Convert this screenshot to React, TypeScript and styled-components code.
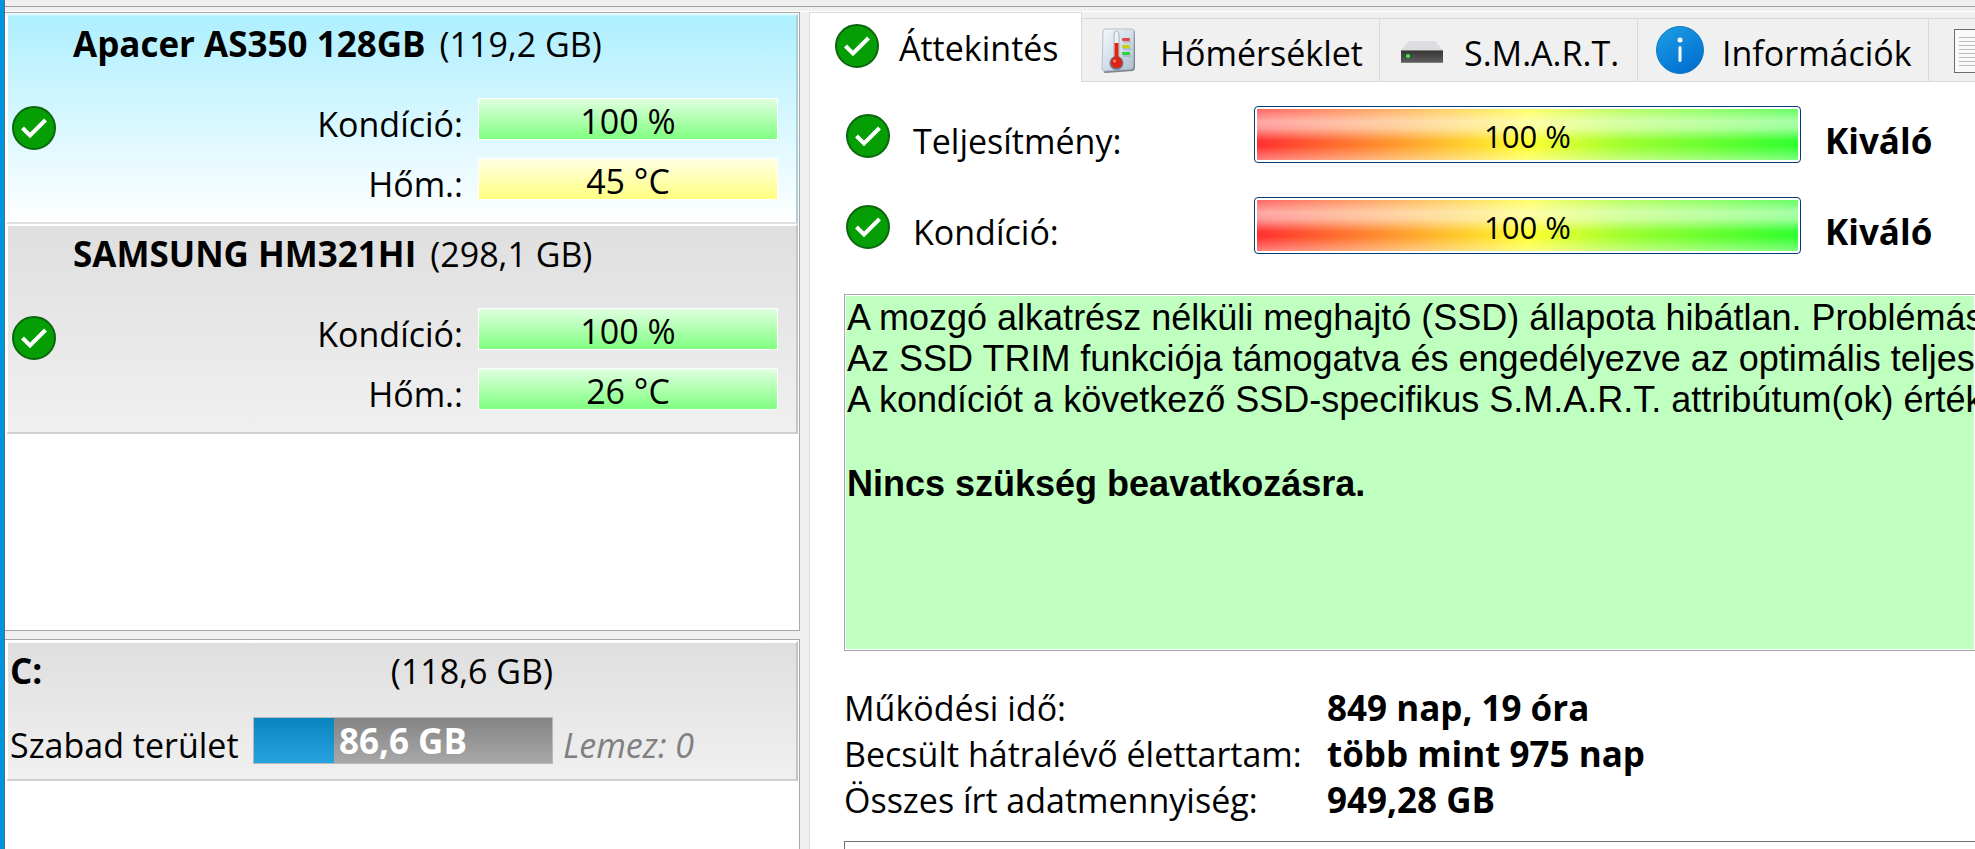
import React from "react";
import styled, { createGlobalStyle } from "styled-components";

const Global = createGlobalStyle`
  * { box-sizing: border-box; }
  html, body, #root { height: 100%; }
  body {
    margin: 0;
    overflow: hidden;
    background: #f0f0f0;
    color: #000;
    font-family: "Open Sans", "Noto Sans", sans-serif;
    font-size: 34px;
    line-height: 46px;
  }
`;

const Window = styled.div`
  height: 100%;
  display: flex;
  flex-direction: column;
  border-left: 4px solid #0095e0;
  box-shadow: inset 1px 0 0 #4d7080;
`;

const Toolbar = styled.header`
  flex: none;
  height: 12px;
  margin-left: 1px;
  border-bottom: 1px solid #fff;
  background: linear-gradient(#f0f0f0 6px, #a0a0a0 6px, #a0a0a0 7px, #f0f0f0 7px);
`;

const Body = styled.div`
  flex: 1;
  min-height: 0;
  margin-left: 1px;
  display: grid;
  grid-template-columns: 795px minmax(0, 1fr);
  column-gap: 9px;
`;

const Sidebar = styled.aside`
  display: flex;
  flex-direction: column;
  gap: 8px;
`;

const List = styled.section<{ $grow?: boolean }>`
  height: ${(p) => (p.$grow ? "auto" : "619px")};
  flex: ${(p) => (p.$grow ? "1" : "none")};
  background: #fff;
  border: 1px solid #a8a8a8;
  border-left: 0;
  border-bottom-width: ${(p) => (p.$grow ? 0 : 1)}px;
  padding: 1px 1px 0;
`;

const Card = styled.article<{ $selected?: boolean }>`
  border: 2px solid;
  border-color: ${(p) => (p.$selected ? "#ccf6ff #a9d0d8 #e0e0e0 #fff" : "#fff #c4c4c4 #d0d0d0 #fff")};
  background: ${(p) => (p.$selected ? "linear-gradient(#aeefff, #fff)" : "linear-gradient(#dfdfdf, #f0f0f0)")};
`;

const DiskBody = styled(Card)`
  height: 210px;
  display: grid;
  grid-template-columns: 61px 1fr auto 300px;
  grid-template-rows: 72px 60px 60px;
  padding: 0 18px 0 4px;
`;

const DiskTitle = styled.h2`
  grid-column: 2 / -1;
  display: flex;
  align-items: baseline;
  gap: 14px;
  margin: 5px 0 0;
  font-size: inherit;
  font-weight: 400;
`;

const Strong = styled.b`
  font-size: 35px;
  font-weight: 700;
`;

const DiskIcon = styled.span`
  grid-row: 2 / 4;
  display: flex;
  padding-top: 18px;
`;

const DiskLabel = styled.span`
  grid-column: 3;
  padding: 13px 15px 0 0;
  text-align: right;
`;

const Level = styled.span<{ $warm?: boolean }>`
  grid-column: 4;
  height: 42px;
  margin-top: 10px;
  border: 1px solid #fff;
  line-height: 44px;
  text-align: center;
  background: ${(p) => (p.$warm ? "linear-gradient(#ffffe4, #ffff80)" : "linear-gradient(#e0ffe0, #80ff80)")};
`;

const VolumeCard = styled(Card)`
  height: 140px;
  padding: 5px 2px 0;
`;

const VolumeRow = styled.div`
  display: grid;
  grid-template-columns: 243px 300px 1fr;
  height: 69px;
`;

const VolumeSize = styled.span`
  text-align: right;
`;

const VolumeLabel = styled.label`
  padding-top: 5px;
`;

const SpaceBar = styled.div`
  height: 47px;
  border: 1px solid #b8b8b8;
  text-align: center;
  line-height: 45px;
  font-size: 35px;
  font-weight: 700;
  color: #fff;
  background:
    linear-gradient(#0a84bf, #27a3df) 0 0 / 27% 100% no-repeat,
    linear-gradient(#848484, #a8a8a8);
`;

const DiskNumber = styled.i`
  padding: 5px 0 0 10px;
  color: #808080;
`;

const Main = styled.main`
  display: flex;
  flex-direction: column;
  min-width: 0;
  overflow: hidden;
`;

const Tabs = styled.nav`
  display: flex;
  align-items: flex-end;
  width: max-content;
`;

const Tab = styled.button<{ $active?: boolean; $width: number }>`
  flex: none;
  display: flex;
  align-items: center;
  width: ${(p) => p.$width}px;
  height: ${(p) => (p.$active ? 70 : 64)}px;
  padding: ${(p) => (p.$active ? "0 0 4px 25px" : "0 0 0 18px")};
  gap: ${(p) => (p.$active ? 20 : 18)}px;
  border: 1px solid #d9d9d9;
  border-width: ${(p) => (p.$active ? "1px 1px 0 1px" : "1px 1px 1px 0")};
  background: ${(p) => (p.$active ? "#fff" : "#f0f0f0")};
  color: inherit;
  font: inherit;
  white-space: nowrap;
`;

const TabLabel = styled.span`
  padding-top: 5px;
`;

const Page = styled.div`
  flex: 1;
  min-height: 0;
  padding: 24px 0 0 34px;
  border-left: 1px solid #d9d9d9;
  background: #fff;
`;

const Gauge = styled.div`
  display: grid;
  grid-template-columns: 69px 341px 547px auto;
  height: 91px;
  align-items: start;
`;

const GaugeIcon = styled.span`
  display: flex;
  padding: 8px 0 0 2px;
`;

const GaugeLabel = styled.span`
  padding-top: 12px;
`;

const GaugeBar = styled.div`
  height: 57px;
  padding: 2px;
  border: 1px solid #003c74;
  border-radius: 4px;
  font-size: 31px;
  line-height: 54px;
  text-align: center;
  background:
    linear-gradient(rgba(255,255,255,.4), rgba(255,255,255,.66) 25%, rgba(255,255,255,.6) 38%, rgba(255,255,255,.2) 62%, rgba(255,255,255,.18) 72%, rgba(255,255,255,.5)) content-box,
    linear-gradient(90deg, #f00, #ff0 50%, #8f0 68%, #0f0) content-box, #fff;
`;

const GaugeResult = styled(Strong)`
  padding: 12px 0 0 24px;
`;

const Report = styled.section`
  height: 357px;
  margin-top: 6px;
  padding: 2px;
  border: 1px solid #a8a8a8;
  border-right: 0;
  box-shadow: inset 0 0 0 1px #fff;
  background: #bfffbf;
  font-family: "Liberation Sans", Arial, sans-serif;
  font-size: 36px;
  line-height: 41px;
  white-space: nowrap;
  overflow: hidden;
`;

const ReportLine = styled.p<{ $strong?: boolean }>`
  margin: ${(p) => (p.$strong ? "43px 0 0" : "0")};
  font-weight: ${(p) => (p.$strong ? 700 : 400)};
`;

const Stats = styled.dl`
  display: grid;
  grid-template-columns: 483px auto;
  margin: 34px 0 18px;
`;

const StatName = styled.dt`
  margin: 0;
`;

const StatValue = styled.dd`
  margin: 0;
  font-size: 35px;
  font-weight: 700;
`;

const Comment = styled.div`
  height: 60px;
  border: 1px solid #707070;
  border-right: 0;
`;

const CheckIcon = () => (
  <svg width="44" height="44" viewBox="0 0 44 44" aria-hidden="true">
    <circle cx="22" cy="22" r="21" fill="#059f05" stroke="#0b660f" strokeWidth="2" />
    <path d="M10.500 22 L18 29.500 L33.500 14" fill="none" stroke="#fff" strokeWidth="4" />
  </svg>
);

const ThermometerIcon = () => (
  <svg width="42" height="48" viewBox="1 0 42 48" aria-hidden="true">
    <defs>
      <linearGradient id="plate" x1="0" y1="0" x2="1" y2="1">
        <stop offset="0" stopColor="#f4f8fb" />
        <stop offset="0.500" stopColor="#d3dfea" />
        <stop offset="1" stopColor="#aebccb" />
      </linearGradient>
    </defs>
    <path d="M5 45 Q4 47 7 47 L34 45 Q36 44 36 42 L36 4 Z" fill="#7c8794" />
    <path d="M6 3 Q4 3 4 6 L3 43 Q3 45 5 45 L32 43 Q34 43 34 41 L35 5 Q35 3 32 3 Z" fill="url(#plate)" stroke="#b4c1cd" />
    <path d="M15 10 Q15 5 17.500 5 Q20 5 20 10 L20 32 L15 32 Z" fill="#eef2f6" stroke="#a9b4c2" />
    <circle cx="17.500" cy="37" r="7" fill="#6c7896" />
    <path d="M15.500 17 H19.500 V31 Q23 33 23 37 Q23 42 17.500 42 Q12 42 12 37 Q12 33 15.500 31 Z" fill="#dd2410" />
    <circle cx="15.500" cy="35" r="1.500" fill="#ff8a70" />
    <rect x="23" y="12" width="8" height="3" rx="1" fill="#e04a48" />
    <rect x="23" y="19" width="8" height="3" rx="1" fill="#c9cf16" />
    <rect x="23" y="26" width="8" height="3" rx="1" fill="#2fd13c" />
    <path d="M24 16 H32 M24 23 H32 M24 30 H32" stroke="#98a5b3" />
  </svg>
);

const DriveIcon = () => (
  <svg width="48" height="48" viewBox="1 0 48 48" aria-hidden="true">
    <defs>
      <linearGradient id="front" x1="0" y1="0" x2="0" y2="1">
        <stop offset="0" stopColor="#333" />
        <stop offset="1" stopColor="#606060" />
      </linearGradient>
    </defs>
    <path d="M12 15 H38 L46 24 H4 Z" fill="#dcdde0" />
    <rect x="4" y="24" width="42" height="13" fill="url(#front)" />
    <path d="M4 24.500 H46 M4 36.500 H46" stroke="#808080" />
    <circle cx="11" cy="30" r="2" fill="#2fff2f" />
  </svg>
);

const InfoIcon = () => (
  <svg width="48" height="48" viewBox="0 0 48 48" aria-hidden="true">
    <defs>
      <linearGradient id="info" x1="0" y1="0" x2="0.600" y2="1">
        <stop offset="0" stopColor="#1e9fe4" />
        <stop offset="1" stopColor="#0271d2" />
      </linearGradient>
    </defs>
    <circle cx="24" cy="24" r="23.500" fill="url(#info)" stroke="#0f7cc4" />
    <circle cx="24" cy="14" r="2.500" fill="#fff" />
    <path d="M24 21.500 V34.500" stroke="#fff" strokeWidth="3" strokeLinecap="round" />
  </svg>
);

const DocumentIcon = () => (
  <svg width="48" height="48" viewBox="1 0 48 48" aria-hidden="true">
    <rect x="8.500" y="3.500" width="34" height="43" fill="#fafafa" stroke="#6c6c6c" />
    <path d="M13 11.500 H38 M13 15.500 H38 M13 19.500 H38 M13 23.500 H38 M13 27.500 H38 M13 31.500 H38 M13 35.500 H38 M13 39.500 H38" stroke="#bdbdbd" />
  </svg>
);

function Disk(props: { name: string; size: string; temp: string; selected?: boolean; warm?: boolean }) {
  return (
    <DiskBody $selected={props.selected}>
      <DiskTitle><Strong>{props.name}</Strong><span>({props.size})</span></DiskTitle>
      <DiskIcon><CheckIcon /></DiskIcon>
      <DiskLabel>Kondíció:</DiskLabel>
      <Level>100 %</Level>
      <DiskLabel>Hőm.:</DiskLabel>
      <Level $warm={props.warm}>{props.temp}</Level>
    </DiskBody>
  );
}

export default function App() {
  return (
    <Window>
      <Global />
      <Toolbar />
      <Body>
        <Sidebar>
          <List>
            <Disk name="Apacer AS350 128GB" size="119,2 GB" temp="45 °C" selected warm />
            <Disk name="SAMSUNG HM321HI" size="298,1 GB" temp="26 °C" />
          </List>
          <List $grow>
            <VolumeCard>
              <VolumeRow>
                <Strong>C:</Strong>
                <VolumeSize>(118,6 GB)</VolumeSize>
              </VolumeRow>
              <VolumeRow>
                <VolumeLabel id="free-space">Szabad terület</VolumeLabel>
                <SpaceBar role="meter" aria-labelledby="free-space">86,6 GB</SpaceBar>
                <DiskNumber>Lemez: 0</DiskNumber>
              </VolumeRow>
            </VolumeCard>
          </List>
        </Sidebar>
        <Main>
          <Tabs>
            <Tab $active $width={273}><CheckIcon /><TabLabel>Áttekintés</TabLabel></Tab>
            <Tab $width={298}><ThermometerIcon /><TabLabel>Hőmérséklet</TabLabel></Tab>
            <Tab $width={258}><DriveIcon /><TabLabel>S.M.A.R.T.</TabLabel></Tab>
            <Tab $width={291}><InfoIcon /><TabLabel>Információk</TabLabel></Tab>
            <Tab $width={200} aria-label="Napló"><DocumentIcon /></Tab>
          </Tabs>
          <Page>
            {["Teljesítmény:", "Kondíció:"].map((label) => (
              <Gauge key={label}>
                <GaugeIcon><CheckIcon /></GaugeIcon>
                <GaugeLabel>{label}</GaugeLabel>
                <GaugeBar>100 %</GaugeBar>
                <GaugeResult>Kiváló</GaugeResult>
              </Gauge>
            ))}
            <Report>
              <ReportLine>A mozgó alkatrész nélküli meghajtó (SSD) állapota hibátlan. Problémás</ReportLine>
              <ReportLine>Az SSD TRIM funkciója támogatva és engedélyezve az optimális teljesít</ReportLine>
              <ReportLine>A kondíciót a következő SSD-specifikus S.M.A.R.T. attribútum(ok) érték</ReportLine>
              <ReportLine $strong>Nincs szükség beavatkozásra.</ReportLine>
            </Report>
            <Stats>
              <StatName>Működési idő:</StatName><StatValue>849 nap, 19 óra</StatValue>
              <StatName>Becsült hátralévő élettartam:</StatName><StatValue>több mint 975 nap</StatValue>
              <StatName>Összes írt adatmennyiség:</StatName><StatValue>949,28 GB</StatValue>
            </Stats>
            <Comment />
          </Page>
        </Main>
      </Body>
    </Window>
  );
}
